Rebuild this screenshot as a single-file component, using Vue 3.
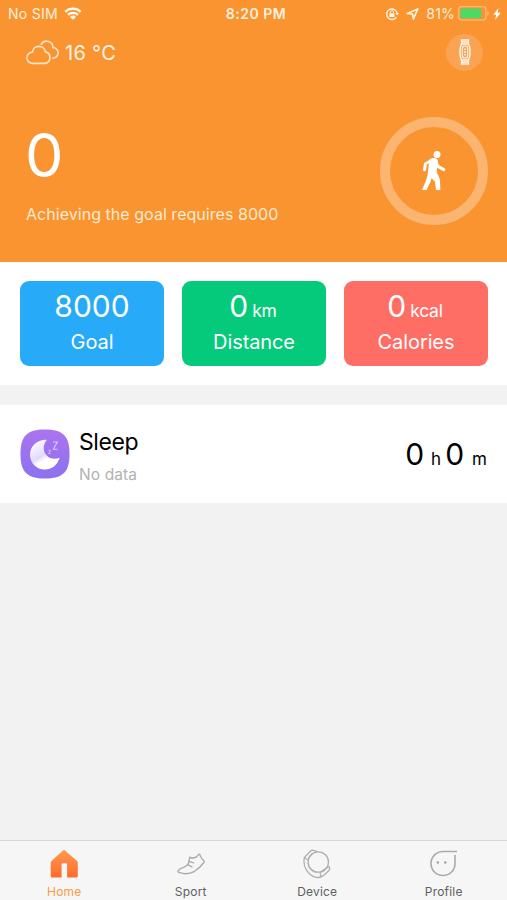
<template>
  <div class="app">
    <header class="hero">
      <div class="status-bar">
        <div class="status-left">
          <span class="carrier">No SIM</span>
          <svg class="wifi" viewBox="0 0 18 13" width="18" height="13">
            <g fill="none" stroke="#fffaf0" stroke-width="2.4">
              <path d="M1.3 4.8a11 11 0 0 1 15.4 0" />
              <path d="M4 7.9a7.2 7.2 0 0 1 10 0" />
            </g>
            <path d="M9 12.8 6 10a4.4 4.4 0 0 1 6 0z" fill="#fffaf0" />
          </svg>
        </div>
        <span class="time">8:20 PM</span>
        <div class="status-right">
          <svg class="lock" viewBox="0 0 14 14" width="14" height="14">
            <path d="M11.4 10.2A5.3 5.3 0 1 1 12.2 6.3" fill="none" stroke="#fff3df" stroke-width="1.4" />
            <path d="M10.4 6h3.6l-1.7 2.6z" fill="#fff3df" />
            <rect x="4.3" y="6.3" width="5.2" height="3.7" rx=".5" fill="#fff3df" />
            <path d="M5.3 6.5V5.3a1.6 1.6 0 0 1 3.2 0v1.2" fill="none" stroke="#fff3df" stroke-width="1" />
          </svg>
          <svg class="arrow" viewBox="0 0 13 12" width="13" height="12">
            <path d="M1.3 5.5 11.8 1 7.4 11 6.4 6z" fill="none" stroke="#fff3df" stroke-width="1.7" stroke-linejoin="round" />
          </svg>
          <span class="percent">81%</span>
          <svg class="battery" viewBox="0 0 31 15" width="31" height="15">
            <rect x=".8" y=".8" width="27" height="13.2" rx="2.5" fill="none" stroke="#fdc08a" stroke-width="1.1" />
            <rect x="2.4" y="2.5" width="20.8" height="9.8" rx=".8" fill="#4cd964" />
            <path d="M29.3 5v5q1.4-.8 1.4-2.5T29.3 5z" fill="#fdc08a" />
          </svg>
          <svg class="bolt" viewBox="0 0 8 12" width="8" height="12">
            <path d="M5.5 0 .3 6.8h3L2 12l5.700-7.200H4.600z" fill="#fff" />
          </svg>
        </div>
      </div>

      <div class="top-row">
        <div class="weather">
          <svg viewBox="0 0 34 25" width="34" height="25">
            <g fill="none" stroke="#ffe3c2" stroke-width="1.7" stroke-linecap="round" stroke-linejoin="round">
              <path d="M6.5 23.3a5.600 5.600 0 0 1 0-11.200 6.500 6.500 0 0 1 12.900-.2 5.800 5.800 0 0 1-.4 11.400z" />
              <path d="M15.2 4.200A6.400 6.400 0 0 1 27 7.600a5.300 5.300 0 0 1-.2 10.600" />
            </g>
          </svg>
          <span>16 °C</span>
        </div>
        <button class="band-button">
          <svg viewBox="0 0 12 26" width="12" height="26">
            <g fill="none" stroke="#fff5e8" stroke-width="1.500">
              <path d="M2.600 5V.9h6.800V5M2.600 21v4.100h6.800V21M2.600 3h6.800M2.600 23h6.800" />
              <path d="M2.800 5h6.400q1.800 2 1.800 8t-1.800 8H2.800Q1 19 1 13t1.800-8z" />
              <rect x="3.300" y="7" width="5.400" height="12" rx="2.600" stroke-width="1.100" />
            </g>
            <g fill="#fff5e8">
              <circle cx="6" cy="10.300" r=".9" />
              <circle cx="6" cy="13" r=".9" />
              <circle cx="6" cy="15.700" r=".9" />
            </g>
          </svg>
        </button>
      </div>

      <div class="progress">
        <div class="steps">
          <div class="count">0</div>
          <div class="hint">Achieving the goal requires 8000</div>
        </div>
        <div class="ring">
          <svg viewBox="0 0 24 40" width="24" height="40">
            <g fill="none" stroke="#fff" stroke-linecap="round" stroke-linejoin="round">
              <path d="M9.500 9.500 3.500 12.800 2.500 18.800" stroke-width="3" />
              <path d="M13.500 10.500 16 15.400 21.800 18.600" stroke-width="3" />
            </g>
            <path d="M7.500 8.200Q10 6.500 13 7 15.800 7.500 15.900 10.300L14.700 21 17 26.300Q17.900 28 18 30L18.400 39H14L13 31 9.700 27 8.400 31 4.600 39H0L4.400 28.500Q6 24 6 20z" fill="#fff" />
            <circle cx="15" cy="3.500" r="3.500" fill="#fff" />
          </svg>
        </div>
      </div>
    </header>

    <section class="stats">
      <div v-for="stat in stats" :key="stat.label" class="stat" :class="stat.type">
        <div class="stat-value">
          {{ stat.value }}<span v-if="stat.unit" class="stat-unit">{{ stat.unit }}</span>
        </div>
        <div class="stat-label">{{ stat.label }}</div>
      </div>
    </section>

    <section class="sleep">
      <svg class="sleep-icon" viewBox="0 0 50 50" width="50" height="50">
        <defs>
          <linearGradient id="sleepBg" x1="0" y1="0" x2="0" y2="1">
            <stop offset="0" stop-color="#ad73ee" />
            <stop offset="1" stop-color="#8b72f0" />
          </linearGradient>
          <linearGradient id="moonBg" x1="0" y1="0" x2=".6" y2="1">
            <stop offset="0" stop-color="#fff" />
            <stop offset=".3" stop-color="#f3eefe" />
            <stop offset=".58" stop-color="#e2dafb" />
            <stop offset=".72" stop-color="#fff" />
          </linearGradient>
        </defs>
        <path d="M25 .5C43 .5 49.500 7 49.500 25S43 49.500 25 49.500.5 43 .5 25 7 .5 25 .5z" fill="url(#sleepBg)" />
        <path d="M27 10.800C23 15.500 22.600 21.500 26.300 26 29.800 30.200 35 30.700 39.600 28.700 37.500 36 31.500 40.500 24.800 40.500 16.500 40.500 10 34 10 25.700 10 17 17.500 10.200 27 10.800z" fill="url(#moonBg)" />
        <g fill="none" stroke="#dcc8ff">
          <path d="M33 13h4.300l-4 7.200h4.200" stroke-width="1.100" />
          <path d="M28.500 21.200h2l-2 3.300h2.200" stroke-width=".8" />
        </g>
      </svg>
      <div class="sleep-text">
        <div class="sleep-title">Sleep</div>
        <div class="sleep-sub">No data</div>
      </div>
      <div class="sleep-time">
        <span class="num">0</span><span class="unit hours">h</span><span class="num">0</span><span class="unit minutes">m</span>
      </div>
    </section>

    <nav class="tab-bar">
      <button v-for="tab in tabs" :key="tab" class="tab" :class="{ active: tab === current }" @click="current = tab">
        <svg v-if="tab === 'Home'" viewBox="0 0 30 30" width="30" height="30">
          <defs>
            <linearGradient id="homeBg" x1="0" y1="0" x2="0" y2="1">
              <stop offset="0" stop-color="#ff9850" />
              <stop offset="1" stop-color="#ff6b2d" />
            </linearGradient>
          </defs>
          <path d="M14 1.500q1-.8 2 0L28 12q.8.700.8 1.800V27q0 1.500-1.500 1.500h-9.200V15.200q0-1-1-1h-3.500q-1 0-1 1v13.300H3.200q-1.500 0-1.500-1.500V13.800q0-1.100.8-1.800z" fill="url(#homeBg)" />
        </svg>
        <svg v-else-if="tab === 'Sport'" viewBox="0 0 30 30" width="30" height="30">
          <g fill="none" stroke="#aaa" stroke-width="1.400" stroke-linecap="round" stroke-linejoin="round">
            <path d="M2 21.800Q3.500 19.500 8 18.200 12.300 16.700 13 12.500L13.800 8.200q2.700 1.600 6.500-.2l2.200-2.400q.9-.9 1.400.3 1 3.500 3.800 5.600.8.800.3 2-4 5-9.400 8.800Q12 26.200 3.500 23.700 1.500 23.100 2 21.800z" />
            <path d="m13 12.400 4.600 1.400M11.400 15.600l4.600 2.200" />
          </g>
        </svg>
        <svg v-else-if="tab === 'Device'" viewBox="0 0 30 30" width="30" height="30">
          <g fill="none" stroke="#b0b0b0" stroke-width="1.300" stroke-linejoin="round">
            <circle cx="16.300" cy="13" r="10.200" />
            <path d="M6 11 2.400 8.500 8.600 2Q9.800.9 11.500 1.400l4 1.300M2.400 8.500Q1 15.500 4.200 20.700 8 26.700 13 28.100q4.600 1.200 8-1.200l6.200-5.600q1-1.500-.3-4.200M6.400 9.300l4-4.800M26.300 17.600l-8.300 5.900M18 23.500l1 4.200M6.200 14.500q.4 6.700 8.500 8.900" />
          </g>
        </svg>
        <svg v-else viewBox="0 0 30 30" width="30" height="30">
          <path d="M28 2.500H14.200A12 12 0 1 0 26 14.400V6" fill="none" stroke="#aaa" stroke-width="1.600" />
          <g fill="#a0a0a0">
            <circle cx="8.800" cy="13.500" r="1.200" />
            <circle cx="16.300" cy="13.500" r="1.200" />
          </g>
        </svg>
        <span>{{ tab }}</span>
      </button>
    </nav>
  </div>
</template>

<script setup>
import { ref } from 'vue'

const stats = [
  { type: 'goal', value: '8000', unit: '', label: 'Goal' },
  { type: 'distance', value: '0', unit: 'km', label: 'Distance' },
  { type: 'calories', value: '0', unit: 'kcal', label: 'Calories' },
]

const tabs = ['Home', 'Sport', 'Device', 'Profile']
const current = ref('Home')
</script>

<style>
body {
  margin: 0;
  background: #f2f2f2;
}
</style>

<style scoped>
.app {
  display: flex;
  flex-direction: column;
  width: 100%;
  height: 100vh;
  overflow: hidden;
  background: #f2f2f2;
  font-family: Inter, "Liberation Sans", sans-serif;
}

svg {
  display: block;
  flex: none;
}

button {
  border: none;
  padding: 0;
  background: none;
  font-family: inherit;
  cursor: pointer;
}

.hero {
  flex: none;
  height: 262px;
  background: #f99431;
  color: #fff;
}

.status-bar {
  display: grid;
  grid-template-columns: 1fr auto 1fr;
  align-items: center;
  height: 27px;
  padding: 0 6px 0 8px;
  font-size: 14px;
  color: #fff0dc;
}

.status-left,
.status-right {
  display: flex;
  align-items: center;
}

.status-right {
  justify-content: flex-end;
}

.carrier {
  letter-spacing: 0.3px;
}

.wifi {
  margin-left: 6px;
  margin-top: -1px;
}

.time {
  padding-left: 3px;
  font-weight: 600;
  font-size: 14px;
  letter-spacing: 0.5px;
}

.arrow {
  margin: 0 7px 0 7px;
}

.percent {
  letter-spacing: 0.2px;
}

.battery {
  margin: -1px 4px 0 3px;
}

.top-row {
  display: flex;
  justify-content: space-between;
  align-items: center;
  height: 50px;
  padding: 0 24px 0 26px;
}

.weather {
  display: flex;
  align-items: center;
  gap: 5px;
  padding-top: 1px;
  font-size: 20px;
  letter-spacing: 0.3px;
  color: #fff3e3;
}

.band-button {
  display: flex;
  align-items: center;
  justify-content: center;
  width: 37px;
  height: 37px;
  border-radius: 50%;
  background: #faa352;
}

.progress {
  display: flex;
  justify-content: space-between;
  padding: 40px 19px 0 26px;
}

.count {
  height: 76px;
  margin-left: -1px;
  font-size: 61px;
  line-height: 76px;
}

.hint {
  margin-top: 10px;
  font-size: 16px;
  line-height: 22px;
  letter-spacing: 0.04px;
  color: #ffe9cf;
}

.ring {
  display: flex;
  align-items: center;
  justify-content: center;
  box-sizing: border-box;
  width: 108px;
  height: 108px;
  border: 10px solid #fbb570;
  border-radius: 50%;
}

.stats {
  display: flex;
  flex: none;
  gap: 18px;
  box-sizing: border-box;
  height: 123px;
  padding: 19px 19px 19px 20px;
  background: #fff;
}

.stat {
  flex: 1;
  border-radius: 9px;
  text-align: center;
  color: #fff;
}

.stat.goal {
  background: #27aaf8;
}

.stat.distance {
  background: #05ca7b;
}

.stat.calories {
  background: #ff6e65;
}

.stat-value {
  height: 50px;
  font-size: 30px;
  line-height: 50px;
}

.stat-unit {
  margin: 0 2px 0 4px;
  font-size: 17.5px;
  letter-spacing: -0.2px;
}

.stat-label {
  font-size: 20px;
  line-height: 22px;
  letter-spacing: -0.1px;
}

.sleep {
  display: flex;
  flex: none;
  align-items: center;
  box-sizing: border-box;
  height: 98px;
  margin-top: 20px;
  padding: 0 20px;
  background: #fff;
}

.sleep-text {
  margin-left: 9px;
  padding-top: 5px;
}

.sleep-title {
  font-size: 23px;
  line-height: 32px;
  letter-spacing: -0.4px;
  color: #000;
}

.sleep-sub {
  margin-top: 5px;
  font-size: 15.5px;
  line-height: 24px;
  letter-spacing: 0.1px;
  color: #b2b2b2;
}

.sleep-time {
  margin-left: auto;
  color: #000;
}

.num {
  font-size: 30px;
  letter-spacing: -1px;
}

.unit {
  font-size: 17px;
}

.hours {
  margin: 0 4px 0 8px;
}

.minutes {
  margin-left: 9px;
}

.tab-bar {
  display: flex;
  flex: none;
  box-sizing: border-box;
  height: 60px;
  margin-top: auto;
  padding-left: 1px;
  border-top: 1px solid #d8d8d8;
  background: #f6f6f6;
}

.tab {
  display: flex;
  flex: 1;
  flex-direction: column;
  align-items: center;
  padding-top: 8px;
  font-size: 12px;
  line-height: 16px;
  letter-spacing: 0.2px;
  color: #606060;
}

.tab span {
  margin-top: 5px;
}

.tab.active {
  color: #fb9a45;
}
</style>
